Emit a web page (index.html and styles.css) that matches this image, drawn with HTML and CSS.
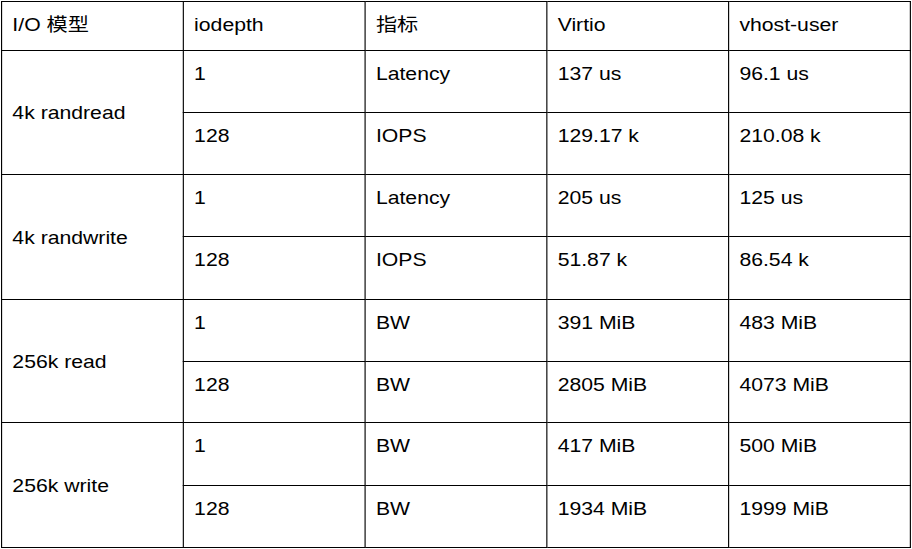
FILE: index.html
```html
<!DOCTYPE html>
<html lang="zh">
<head>
<meta charset="utf-8">
<link rel="stylesheet" href="styles.css">
</head>
<body>
<table class="perf">
  <colgroup>
    <col class="c"><col class="c"><col class="c"><col class="c"><col class="c">
  </colgroup>
  <thead>
    <tr class="head">
      <th>I/O 模型</th><th>iodepth</th><th>指标</th><th>Virtio</th><th>vhost-user</th>
    </tr>
  </thead>
  <tbody>
    <tr class="r62"><td class="model" rowspan="2">4k randread</td><td>1</td><td>Latency</td><td>137 us</td><td>96.1 us</td></tr>
    <tr class="r62"><td>128</td><td>IOPS</td><td>129.17 k</td><td>210.08 k</td></tr>
    <tr class="r62"><td class="model" rowspan="2">4k randwrite</td><td>1</td><td>Latency</td><td>205 us</td><td>125 us</td></tr>
    <tr class="r63"><td>128</td><td>IOPS</td><td>51.87 k</td><td>86.54 k</td></tr>
    <tr class="r62"><td class="model" rowspan="2">256k read</td><td>1</td><td>BW</td><td>391 MiB</td><td>483 MiB</td></tr>
    <tr class="r61"><td>128</td><td>BW</td><td>2805 MiB</td><td>4073 MiB</td></tr>
    <tr class="r63"><td class="model" rowspan="2">256k write</td><td>1</td><td>BW</td><td>417 MiB</td><td>500 MiB</td></tr>
    <tr class="r62"><td>128</td><td>BW</td><td>1934 MiB</td><td>1999 MiB</td></tr>
  </tbody>
</table>
</body>
</html>
```

FILE: styles.css
```css
html, body {
  margin: 0;
  padding: 0;
  background: #ffffff;
}

body {
  padding: 1px 0 0 1px;
  font-family: "Liberation Sans", Arial, "Noto Sans CJK SC", sans-serif;
  font-size: 18.67px;
  color: #000000;
}

/* the reference is horizontally stretched; reproduce that with a scale */
.perf {
  border-collapse: collapse;
  table-layout: fixed;
  width: 800px;
  transform: scaleX(1.136);
  transform-origin: 0 0;
}

.perf .c {
  width: 160px;
}

.perf th,
.perf td {
  border: 1px solid #000000;
  padding: 12px 8px 0 9px;
  text-align: left;
  vertical-align: top;
  font-weight: normal;
  line-height: 21px;
  white-space: nowrap;
  box-sizing: border-box;
}

.head {
  height: 49px;
}

.r61 {
  height: 61px;
}

.r62 {
  height: 62px;
}

.r63 {
  height: 63px;
}

.perf td.model {
  vertical-align: middle;
  padding-top: 0;
  padding-bottom: 0;
}
```
